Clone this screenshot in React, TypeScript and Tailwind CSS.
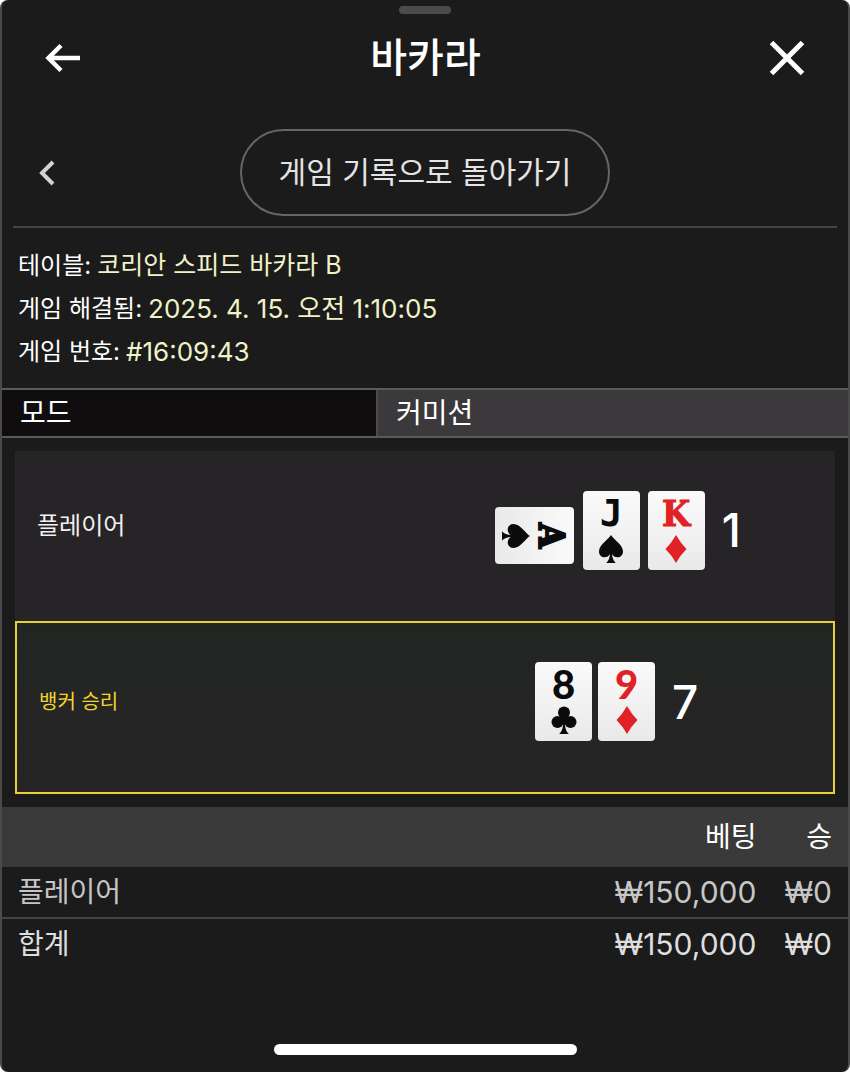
type Suit = 'spade' | 'club' | 'diamond';

type Card = { rank: string; suit: Suit; sideways?: boolean };

const details = [
  { label: '테이블', value: '코리안 스피드 바카라 B', size: 'text-[25px]' },
  { label: '게임 해결됨', value: '2025. 4. 15. 오전 1:10:05', size: 'text-[26px]' },
  { label: '게임 번호', value: '#16:09:43', size: 'text-[26px]' },
];

const playerCards: Card[] = [
  { rank: 'A', suit: 'spade', sideways: true },
  { rank: 'J', suit: 'spade' },
  { rank: 'K', suit: 'diamond' },
];

const bankerCards: Card[] = [
  { rank: '8', suit: 'club' },
  { rank: '9', suit: 'diamond' },
];

const rankFont: Record<string, string> = {
  A: "font-['DejaVu_Serif_Condensed','DejaVu_Serif',serif] text-[36px] font-bold [-webkit-text-stroke:2px]",
  K: "font-['DejaVu_Serif_Condensed','DejaVu_Serif',serif] text-[36px] font-bold [-webkit-text-stroke:1px]",
  J: "font-['DejaVu_Sans_Mono',monospace] text-[38px] font-bold",
};

const numberFont = "font-['Lato',sans-serif] text-[40px] font-black";

function SuitIcon({ suit }: { suit: Suit }) {
  return (
    <svg viewBox="0 0 26 28" className="w-[26px] h-7" fill="currentColor" aria-hidden="true">
      {suit === 'spade' && (
        <path d="M13 0C15 4 25 9.500 25 16.500C25 20 22.500 22.300 19.500 22.300C17 22.300 15 21 14 19C14.300 23 15.500 26 17.800 28H8.200C10.500 26 11.700 23 12 19C11 21 9 22.300 6.500 22.300C3.500 22.300 1 20 1 16.500C1 9.500 11 4 13 0Z" />
      )}
      {suit === 'club' && (
        <>
          <circle cx="13" cy="6.500" r="6" />
          <circle cx="6.500" cy="16" r="6" />
          <circle cx="19.500" cy="16" r="6" />
          <path d="M10 11H16L15 16L14 19C14.300 23 15.500 26 17.800 28H8.200C10.500 26 11.700 23 12 19L10 16Z" />
        </>
      )}
      {suit === 'diamond' && <path d="M13 0Q17.500 8 23.500 14Q17.500 20 13 28Q8.500 20 2.500 14Q8.500 8 13 0Z" />}
    </svg>
  );
}

function PlayingCard({ rank, suit, sideways }: Card) {
  const color = suit === 'diamond' ? 'text-[#e02226]' : 'text-[#0b0b0d]';
  const face = (
    <div
      className={`flex flex-col items-center gap-2 w-[57px] h-[79px] pt-2 rounded-[4px] bg-linear-to-b from-[#fafafb] to-[#e9e9ea] ${color} ${sideways ? 'rotate-90' : ''}`}
    >
      <span className={`h-7 leading-7 ${rankFont[rank] ?? numberFont}`}>{rank}</span>
      <SuitIcon suit={suit} />
    </div>
  );
  return sideways ? <div className="flex items-center justify-center w-20 h-20 pt-2.5">{face}</div> : face;
}

function Hand({ cards, score, gap }: { cards: Card[]; score: number; gap: string }) {
  return (
    <div className="flex items-center justify-center">
      <div className={`flex items-center ${gap}`}>
        {cards.map((card) => (
          <PlayingCard key={card.rank + card.suit} {...card} />
        ))}
      </div>
      <span className="ml-[17px] text-[46px] leading-[48px] font-medium text-white">{score}</span>
    </div>
  );
}

export default function App() {
  return (
    <div className="bg-white">
      <main className="flex flex-col min-h-screen overflow-hidden rounded-lg border-x-2 border-[#4a4a4b] bg-[#1b1b1b] text-white font-['Inter','Noto_Sans_CJK_KR',sans-serif]">
        <div className="mx-auto mt-1.5 w-[52px] h-2 rounded-full bg-[#4b4b4b]" />

        <header className="flex items-center justify-between h-[88px] pl-[42px] pr-[43px]">
          <button type="button" aria-label="뒤로">
            <svg viewBox="0 0 38 30" className="w-[38px] h-[30px]" fill="none" stroke="currentColor" strokeWidth="4.500" aria-hidden="true">
              <path d="M36 15H5M17 2.500L4.500 15L17 27.500" />
            </svg>
          </button>
          <h1 className="text-[40px] leading-[60px] font-medium">바카라</h1>
          <button type="button" aria-label="닫기">
            <svg viewBox="0 0 36 36" className="w-9 h-9" fill="none" stroke="currentColor" strokeWidth="5" aria-hidden="true">
              <path d="M2.500 2.500L33.500 33.500M33.500 2.500L2.500 33.500" />
            </svg>
          </button>
        </header>

        <nav className="grid grid-cols-[1fr_auto_1fr] items-center mx-[11px] pt-[27px] pb-2.5 border-b-2 border-[#454545]">
          <button type="button" aria-label="이전" className="justify-self-start pl-6 text-[#d2d2d2]">
            <svg viewBox="0 0 18 26" className="w-[18px] h-[26px]" fill="none" stroke="currentColor" strokeWidth="4" aria-hidden="true">
              <path d="M16 2L5 13L16 24" />
            </svg>
          </button>
          <button type="button" className="h-[87px] px-[37px] rounded-full border-2 border-[#666] text-[30px] text-[#e4e4e4]">
            게임 기록으로 돌아가기
          </button>
        </nav>

        <dl className="px-4 pt-4 pb-[15px] text-2xl leading-[43px]">
          {details.map((item) => (
            <div key={item.label} className="flex gap-1.5">
              <dt>{item.label}:</dt>
              <dd className={`text-[#f0f2c8] leading-[43px] ${item.size}`}>{item.value}</dd>
            </div>
          ))}
        </dl>

        <div className="grid grid-cols-[376px_1fr] border-y-2 border-[#5a595b] text-[28px] leading-[46px]">
          <span className="pl-[18px] bg-[#0f0d0e] border-r-2 border-[#4c4b4d]">모드</span>
          <span className="pl-[18px] bg-[#3b393b]">커미션</span>
        </div>

        <section className="mx-[13px] my-[13px]">
          <div className="grid grid-cols-[47fr_53fr] items-center h-[170px] pb-3 bg-[#262426]">
            <h2 className="pl-[22px] pb-2 text-2xl text-[#f0f0f0]">플레이어</h2>
            <Hand cards={playerCards} score={1} gap="gap-2" />
          </div>
          <div className="grid grid-cols-[47fr_53fr] items-center h-[173px] pb-3 border-2 border-[#e9ce35] bg-linear-to-b from-[#222623] to-[#262425]">
            <h2 className="pl-[22px] text-xl text-[#f0d52c]">뱅커 승리</h2>
            <Hand cards={bankerCards} score={7} gap="gap-1.5" />
          </div>
        </section>

        <table className="w-full text-[28px] leading-[50px]">
          <thead>
            <tr className="h-[60px] bg-[#3a3a3a]">
              <th className="w-full" aria-label="베팅 종류" />
              <th className="font-normal text-right">베팅</th>
              <th className="pl-7 pr-4 font-normal text-right">승</th>
            </tr>
          </thead>
          <tbody>
            <tr className="border-b-2 border-[#434343] text-[#c6c6c6]">
              <th scope="row" className="pl-4 font-normal text-left">플레이어</th>
              <td className="text-right text-[30px]">₩150,000</td>
              <td className="pl-7 pr-4 text-right text-[30px]">₩0</td>
            </tr>
            <tr className="text-[#dedede]">
              <th scope="row" className="pl-4 font-normal text-left">합계</th>
              <td className="text-right text-[30px]">₩150,000</td>
              <td className="pl-7 pr-4 text-right text-[30px]">₩0</td>
            </tr>
          </tbody>
        </table>

        <div className="mx-auto mt-auto mb-[17px] w-[303px] h-[11px] rounded-full bg-white" />
      </main>
    </div>
  );
}
